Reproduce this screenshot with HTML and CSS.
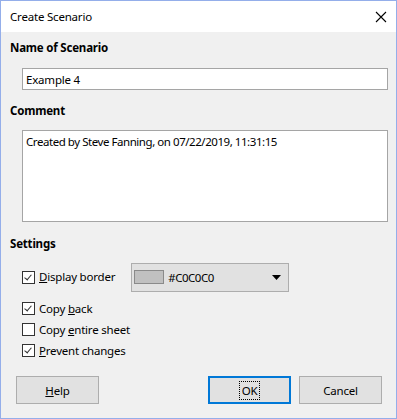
FILE: index.html
```html
<!DOCTYPE html>
<html lang="en">
<head>
    <meta charset="UTF-8">
    <meta name="viewport" content="width=device-width, initial-scale=1.0">
    <title>Create Scenario</title>
    <link rel="stylesheet" href="styles.css">
</head>
<body>
    <div class="window">
        <div class="titlebar">
            <span class="title">Create Scenario</span>
            <svg class="close" width="12" height="12" viewBox="0 0 12 12">
                <path d="M1 1 L11 11 M11 1 L1 11" stroke="#000" stroke-width="1.1" fill="none"/>
            </svg>
        </div>

        <div class="content">
            <div class="label label-name">Name of Scenario</div>
            <input type="text" class="field" value="Example 4">

            <div class="label label-comment">Comment</div>
            <textarea class="field comment">Created by Steve Fanning, on 07/22/2019, 11:31:15</textarea>

            <div class="label label-settings">Settings</div>

            <div class="setting first">
                <span class="check checked"></span>
                <span class="text"><u>D</u>isplay border</span>
                <div class="dropdown">
                    <span class="swatch"></span>
                    <span class="color-name">#C0C0C0</span>
                    <svg class="arrow" width="9" height="5" viewBox="0 0 9 5">
                        <path d="M0 0 L9 0 L4.5 5 Z" fill="#000"/>
                    </svg>
                </div>
            </div>
            <div class="setting">
                <span class="check checked"></span>
                <span class="text">Copy <u>b</u>ack</span>
            </div>
            <div class="setting">
                <span class="check"></span>
                <span class="text">Copy <u>e</u>ntire sheet</span>
            </div>
            <div class="setting">
                <span class="check checked"></span>
                <span class="text"><u>P</u>revent changes</span>
            </div>

            <div class="buttons">
                <button class="btn"><u>H</u>elp</button>
                <div class="right-buttons">
                    <button class="btn default"><span class="focus">OK</span></button>
                    <button class="btn">Cancel</button>
                </div>
            </div>
        </div>
    </div>
</body>
</html>
```

FILE: styles.css
```css
body {
    margin: 0;
    font-family: "Noto Sans", "Open Sans", sans-serif;
    font-size: 11.5px;
    letter-spacing: -0.2px;
    color: #000;
    background: #f0f0f0;
}
.window {
    width: 397px;
    height: 419px;
    box-sizing: border-box;
    border: 1px solid #94aeea;
    background: #f0f0f0;
    display: flex;
    flex-direction: column;
}
.titlebar {
    height: 31px;
    background: #fff;
    display: flex;
    align-items: center;
    justify-content: space-between;
    padding: 0 9px 0 9px;
}
.title {
    line-height: 16px;
    margin-top: 1px;
}
.close {
    margin-top: 1px;
}
.content {
    display: flex;
    flex-direction: column;
    padding: 0 8px 0 15px;
}
.label {
    font-weight: bold;
    line-height: 16px;
    margin-left: -6px;
}
.label-name {
    margin-top: 8px;
}
.label-comment {
    margin-top: 13px;
}
.label-settings {
    margin-top: 14px;
}
.field {
    box-sizing: border-box;
    margin: 12px 0 0 6px;
    width: 366px;
    height: 22px;
    border: 1px solid #a5a5a5;
    background: #fff;
    font-family: inherit;
    font-size: 11.5px;
    letter-spacing: -0.2px;
    color: #000;
    padding: 0 3px;
    outline: none;
}
.comment {
    margin-top: 11px;
    height: 92px;
    resize: none;
    padding: 3px 3px;
    line-height: 16px;
    letter-spacing: -0.45px;
}
.setting {
    display: flex;
    align-items: center;
    height: 21px;
    margin-left: 6px;
}
.setting.first {
    height: 28px;
    margin-top: 11px;
    margin-bottom: 7px;
}
.check {
    width: 13px;
    height: 13px;
    box-sizing: border-box;
    border: 1px solid #333;
    background: #fff;
    position: relative;
    flex: none;
}
.check.checked::after {
    content: "";
    position: absolute;
    left: 3px;
    top: 1px;
    width: 3px;
    height: 6px;
    border-right: 1px solid #333;
    border-bottom: 1px solid #333;
    transform: rotate(40deg);
}
.text {
    margin-left: 4px;
    line-height: 16px;
}
.dropdown {
    margin-left: 16px;
    width: 158px;
    height: 29px;
    box-sizing: border-box;
    border: 1px solid #adadad;
    background: #e1e1e1;
    display: flex;
    align-items: center;
    padding-left: 2px;
}
.swatch {
    width: 30px;
    height: 14px;
    box-sizing: border-box;
    border: 1px solid #8a8a8a;
    background: #c0c0c0;
}
.color-name {
    margin-left: 4px;
    letter-spacing: -0.5px;
}
.arrow {
    margin-left: auto;
    margin-right: 7px;
}
.buttons {
    display: flex;
    justify-content: space-between;
    margin-top: 15px;
    margin-right: 6px;
}
.right-buttons {
    display: flex;
    gap: 8px;
}
.btn {
    width: 83px;
    height: 28px;
    box-sizing: border-box;
    border: 1px solid #adadad;
    background: #e1e1e1;
    font-family: inherit;
    font-size: 11.5px;
    letter-spacing: -0.2px;
    color: #000;
    padding: 0;
}
.btn.default {
    border: 2px solid #0078d7;
}
.focus {
    outline: 1px dotted #000;
    outline-offset: 1px;
    padding: 0 1px;
}
```
